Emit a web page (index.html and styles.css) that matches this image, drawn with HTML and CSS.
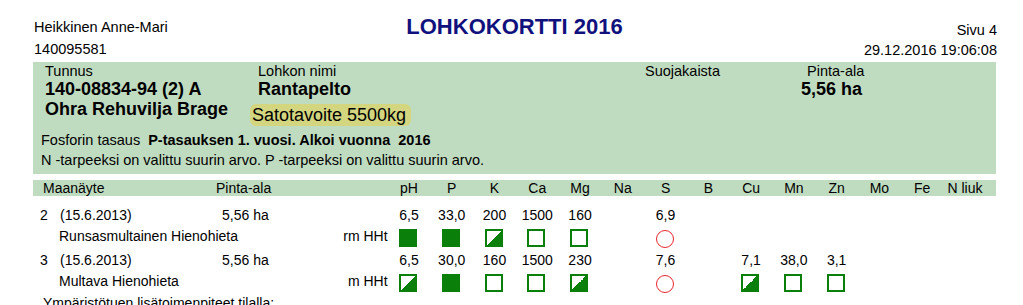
FILE: index.html
```html
<!DOCTYPE html>
<html lang="fi">
<head>
    <meta charset="UTF-8">
    <meta name="viewport" content="width=device-width, initial-scale=1.0">
    <title>Lohkokortti 2016</title>
    <link rel="stylesheet" href="styles.css">
</head>
<body>

<div class="page">
    <!-- Page header -->
    <header class="top">
        <div class="owner">
            <div>Heikkinen Anne-Mari</div>
            <div>140095581</div>
        </div>
        <h1 class="title">LOHKOKORTTI 2016</h1>
        <div class="meta">
            <div>Sivu 4</div>
            <div>29.12.2016 19:06:08</div>
        </div>
    </header>

    <!-- Parcel info -->
    <section class="block">
        <div class="block-grid">
            <div class="label">Tunnus</div>
            <div class="label">Lohkon nimi</div>
            <div class="label">Suojakaista</div>
            <div class="label pad">Pinta-ala</div>
            <div class="value">140-08834-94 (2) A</div>
            <div class="value">Rantapelto</div>
            <div class="value"></div>
            <div class="value">5,56 ha</div>
        </div>
        <div class="crop-row">
            <div class="crop">Ohra Rehuvilja Brage</div>
            <div class="target">Satotavoite 5500kg</div>
        </div>
        <div class="notes">
            <div>Fosforin tasaus&nbsp; <b>P-tasauksen 1. vuosi. Alkoi vuonna&nbsp; 2016</b></div>
            <div>N -tarpeeksi on valittu suurin arvo. P -tarpeeksi on valittu suurin arvo.</div>
        </div>
    </section>

    <!-- Soil analysis -->
    <div class="analysis-head">
        <div class="first">Maanäyte</div>
        <div>Pinta-ala</div>
        <div class="cell">pH</div>
        <div class="cell">P</div>
        <div class="cell">K</div>
        <div class="cell">Ca</div>
        <div class="cell">Mg</div>
        <div class="cell">Na</div>
        <div class="cell">S</div>
        <div class="cell">B</div>
        <div class="cell">Cu</div>
        <div class="cell">Mn</div>
        <div class="cell">Zn</div>
        <div class="cell">Mo</div>
        <div class="cell">Fe</div>
        <div class="cell">N liuk</div>
    </div>

    <div class="sample first-sample">
        <div class="line line-values">
            <div class="lead"><span class="no">2</span><span class="date">(15.6.2013)</span><span>5,56 ha</span></div>
            <div class="cell">6,5</div>
            <div class="cell">33,0</div>
            <div class="cell">200</div>
            <div class="cell">1500</div>
            <div class="cell">160</div>
            <div class="cell"></div>
            <div class="cell">6,9</div>
            <div class="cell"></div>
            <div class="cell"></div>
            <div class="cell"></div>
            <div class="cell"></div>
            <div class="cell"></div>
            <div class="cell"></div>
            <div class="cell"></div>
        </div>
        <div class="line line-marks">
            <div class="lead"><span>Runsasmultainen Hienohieta</span><span>rm HHt</span></div>
            <div class="cell"><span class="mark full"></span></div>
            <div class="cell"><span class="mark full"></span></div>
            <div class="cell"><span class="mark half"></span></div>
            <div class="cell"><span class="mark"></span></div>
            <div class="cell"><span class="mark"></span></div>
            <div class="cell"></div>
            <div class="cell"><span class="ring"></span></div>
            <div class="cell"></div>
            <div class="cell"></div>
            <div class="cell"></div>
            <div class="cell"></div>
            <div class="cell"></div>
            <div class="cell"></div>
            <div class="cell"></div>
        </div>
    </div>

    <div class="sample">
        <div class="line line-values">
            <div class="lead"><span class="no">3</span><span class="date">(15.6.2013)</span><span>5,56 ha</span></div>
            <div class="cell">6,5</div>
            <div class="cell">30,0</div>
            <div class="cell">160</div>
            <div class="cell">1500</div>
            <div class="cell">230</div>
            <div class="cell"></div>
            <div class="cell">7,6</div>
            <div class="cell"></div>
            <div class="cell">7,1</div>
            <div class="cell">38,0</div>
            <div class="cell">3,1</div>
            <div class="cell"></div>
            <div class="cell"></div>
            <div class="cell"></div>
        </div>
        <div class="line line-marks">
            <div class="lead"><span>Multava Hienohieta</span><span>m HHt</span></div>
            <div class="cell"><span class="mark half"></span></div>
            <div class="cell"><span class="mark full"></span></div>
            <div class="cell"><span class="mark"></span></div>
            <div class="cell"><span class="mark"></span></div>
            <div class="cell"><span class="mark half"></span></div>
            <div class="cell"></div>
            <div class="cell"><span class="ring"></span></div>
            <div class="cell"></div>
            <div class="cell"><span class="mark half"></span></div>
            <div class="cell"><span class="mark"></span></div>
            <div class="cell"><span class="mark"></span></div>
            <div class="cell"></div>
            <div class="cell"></div>
            <div class="cell"></div>
        </div>
    </div>

    <p class="extra">Ympäristötuen lisätoimenpiteet tilalla:</p>
</div>

</body>
</html>
```

FILE: styles.css
```css
html, body {
    overflow: hidden;
}
body {
    margin: 0;
    font-family: "Liberation Sans", Arial, sans-serif;
    color: #000;
}
.page {
    width: 963px;
    margin-left: 33px;
}

/* header */
.top {
    display: grid;
    grid-template-columns: 1fr auto 1fr;
    padding-top: 14px;
    font-size: 14.5px;
}
.owner {
    padding-top: 2px;
    padding-left: 1px;
    line-height: 22px;
}
.meta {
    padding-top: 6px;
    margin-right: -1px;
    line-height: 20px;
    text-align: right;
}
.title {
    margin: 0;
    font-size: 22px;
    line-height: 26px;
    color: #11117d;
}

/* parcel block */
.block {
    margin-top: 2px;
    padding-bottom: 4px;
    background-color: #c0dcc0;
}
.block-grid {
    display: grid;
    grid-template-columns: 213px 387px 156px 1fr;
    padding-left: 12px;
}
.label {
    font-size: 14.5px;
    line-height: 18px;
}
.value {
    font-size: 18px;
    font-weight: bold;
    line-height: 18px;
}
.pad {
    padding-left: 6px;
}
.crop-row {
    display: flex;
    align-items: flex-start;
    height: 28px;
    padding-left: 12px;
}
.crop {
    width: 213px;
    font-size: 18px;
    font-weight: bold;
    line-height: 22px;
}
.target {
    margin: 6px 0 0 -8px;
    padding: 0 5px 0 2px;
    font-size: 18px;
    line-height: 22px;
    background-color: #d3d67f;
    border-radius: 6px;
}
.notes {
    margin-top: 4px;
    padding-left: 8px;
    font-size: 14.5px;
    line-height: 20px;
}

/* analysis table */
.analysis-head,
.line {
    display: grid;
    grid-template-columns: 183px 171.6px repeat(14, 42.77px);
    font-size: 14px;
}
.analysis-head {
    margin-top: 6px;
    height: 16px;
    line-height: 16px;
    background-color: #c0dcc0;
}
.analysis-head .first {
    padding-left: 10px;
}
.cell {
    display: flex;
    justify-content: center;
    align-items: flex-start;
    white-space: nowrap;
}
.lead {
    grid-column: 1 / 3;
    display: flex;
}
.first-sample {
    margin-top: 9px;
}
.line-values {
    height: 20px;
    line-height: 20px;
}
.no {
    width: 27px;
    padding-left: 7px;
    box-sizing: border-box;
}
.date {
    width: 162px;
}
.line-marks {
    height: 25px;
    line-height: 22px;
}
.line-marks .lead {
    justify-content: space-between;
    padding-left: 26px;
}
.mark {
    display: block;
    width: 18px;
    height: 18px;
    margin-top: 4px;
    margin-right: 2px;
    box-sizing: border-box;
    border: 2px solid #0a7f0a;
    background-color: #fff;
}
.mark.full {
    background-color: #0a7f0a;
}
.mark.half {
    background: linear-gradient(to bottom right, #fff 50%, #0a7f0a 50%);
}
.ring {
    display: block;
    width: 18px;
    height: 18px;
    margin-top: 5px;
    margin-right: 2px;
    box-sizing: border-box;
    border: 1.5px solid #e8262e;
    border-radius: 50%;
}
.extra {
    margin: 0;
    padding-left: 10px;
    font-size: 14px;
    line-height: 16px;
}
```
